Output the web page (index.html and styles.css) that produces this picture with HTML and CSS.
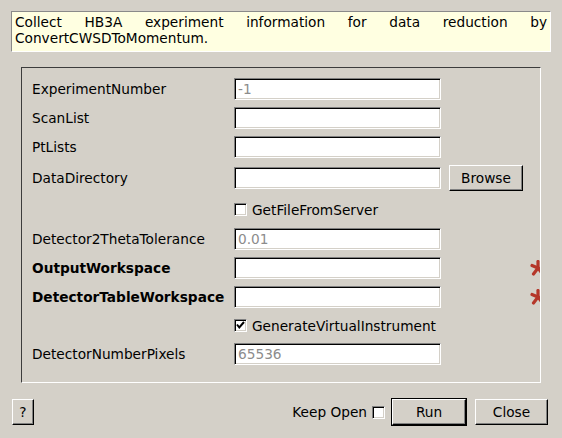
FILE: index.html
```html
<!DOCTYPE html>
<html>
<head>
<meta charset="utf-8">
<link rel="stylesheet" href="styles.css">
</head>
<body>
<div class="page">
  <div class="desc">Collect HB3A experiment information for data reduction by ConvertCWSDToMomentum.</div>
  <div class="frame">
    <div class="grid">
      <div class="label">ExperimentNumber</div>
      <div class="input"><span class="ph">-1</span></div>
      <div></div><div></div>

      <div class="label">ScanList</div>
      <div class="input"></div>
      <div></div><div></div>

      <div class="label">PtLists</div>
      <div class="input"></div>
      <div></div><div></div>

      <div class="label">DataDirectory</div>
      <div class="input"></div>
      <div class="btncell"><div class="btn browse">Browse</div></div>
      <div></div>

      <div></div>
      <div class="check-row"><span class="check"></span><span>GetFileFromServer</span></div>

      <div class="label">Detector2ThetaTolerance</div>
      <div class="input"><span class="ph">0.01</span></div>
      <div></div><div></div>

      <div class="label bold">OutputWorkspace</div>
      <div class="input"></div>
      <div></div>
      <div class="star"><svg width="20" height="16" viewBox="0 0 20 16"><g stroke="#b5372a" stroke-width="3.2" stroke-linecap="round"><line x1="15" y1="8" x2="15" y2="1.5"/><line x1="15" y1="8" x2="9" y2="5.5"/><line x1="15" y1="8" x2="10.5" y2="14"/><line x1="15" y1="8" x2="19.5" y2="14"/></g></svg></div>

      <div class="label bold">DetectorTableWorkspace</div>
      <div class="input"></div>
      <div></div>
      <div class="star"><svg width="20" height="16" viewBox="0 0 20 16"><g stroke="#b5372a" stroke-width="3.2" stroke-linecap="round"><line x1="15" y1="8" x2="15" y2="1.5"/><line x1="15" y1="8" x2="9" y2="5.5"/><line x1="15" y1="8" x2="10.5" y2="14"/><line x1="15" y1="8" x2="19.5" y2="14"/></g></svg></div>

      <div></div>
      <div class="check-row"><span class="check checked"><svg width="11" height="11" viewBox="0 0 11 11"><path d="M2 4.5 L4.3 7.5 L9 2" fill="none" stroke="#000" stroke-width="2"/></svg></span><span>GenerateVirtualInstrument</span></div>

      <div class="label">DetectorNumberPixels</div>
      <div class="input"><span class="ph">65536</span></div>
      <div></div><div></div>
    </div>
  </div>
  <div class="footer">
    <div class="btn help">?</div>
    <div class="spacer"></div>
    <span class="keep">Keep Open</span>
    <span class="check"></span>
    <div class="default"><div class="btn run">Run</div></div>
    <div class="btn close">Close</div>
  </div>
</div>
</body>
</html>
```

FILE: styles.css
```css
html, body {
  margin: 0;
  padding: 0;
}
body {
  background: #d4d0c8;
  font-family: "DejaVu Sans", sans-serif;
  font-size: 13.7px;
  color: #000;
  width: 562px;
  height: 438px;
  overflow: hidden;
}
.page {
  padding: 11px 11px 0 11px;
}
.desc {
  box-sizing: border-box;
  height: 41px;
  background: #ffffe1;
  border: 1px solid;
  border-color: #8a8a8a #ffffff #ffffff #8a8a8a;
  padding: 2px 3px 0 3px;
  line-height: 16px;
  text-align: justify;
}
.frame {
  box-sizing: border-box;
  margin: 15px 10px 0 10px;
  height: 316px;
  border: 1px solid;
  border-color: #3c3c3c #ffffff #ffffff #3c3c3c;
  padding: 10px 0 0 10px;
  overflow: hidden;
}
.grid {
  display: grid;
  grid-template-columns: 202px 207px 82px 17px;
  grid-template-rows: 22px 22px 22px 26px 23px 22px 22px 22px 21px 22px;
  row-gap: 7px;
}
.label {
  align-self: center;
  white-space: nowrap;
  line-height: 16px;
}
.bold {
  font-weight: bold;
}
.input {
  box-sizing: border-box;
  height: 22px;
  align-self: center;
  background: #fff;
  border: 1px solid;
  border-color: #808080 #ffffff #ffffff #808080;
  box-shadow: inset 1px 1px 0 #000, inset -1px -1px 0 #d4d0c8;
  padding: 2px 3px 0 3px;
  line-height: 16px;
}
.ph {
  color: #8c8c8c;
}
.btncell {
  display: flex;
  align-items: center;
  padding-left: 8px;
}
.btn {
  box-sizing: border-box;
  display: flex;
  align-items: center;
  justify-content: center;
  background: #d4d0c8;
  border: 1px solid;
  border-color: #ffffff #000000 #000000 #ffffff;
  box-shadow: inset -1px -1px 0 #808080;
  line-height: 16px;
}
.browse {
  width: 74px;
  height: 26px;
}
.check-row {
  grid-column: 2 / 5;
  display: flex;
  align-items: center;
  gap: 5px;
  white-space: nowrap;
}
.check {
  box-sizing: border-box;
  width: 13px;
  height: 13px;
  flex: none;
  background: #fff;
  border: 1px solid;
  border-color: #808080 #ffffff #ffffff #808080;
  box-shadow: inset 1px 1px 0 #000, inset -1px -1px 0 #d4d0c8;
  display: flex;
  align-items: center;
  justify-content: center;
}
.check svg {
  display: block;
}
.star {
  display: flex;
  align-items: center;
}
.star svg {
  display: block;
  flex: none;
}
.footer {
  display: flex;
  align-items: center;
  margin-top: 15px;
  height: 28px;
  padding: 0 3px 0 1px;
}
.help {
  width: 22px;
  height: 26px;
}
.spacer {
  flex: 1;
}
.keep {
  margin-right: 5px;
  line-height: 16px;
}
.default {
  margin-left: 6px;
  border: 1px solid #000;
}
.run {
  width: 74px;
  height: 26px;
}
.close {
  margin-left: 8px;
  width: 73px;
  height: 26px;
}
```
